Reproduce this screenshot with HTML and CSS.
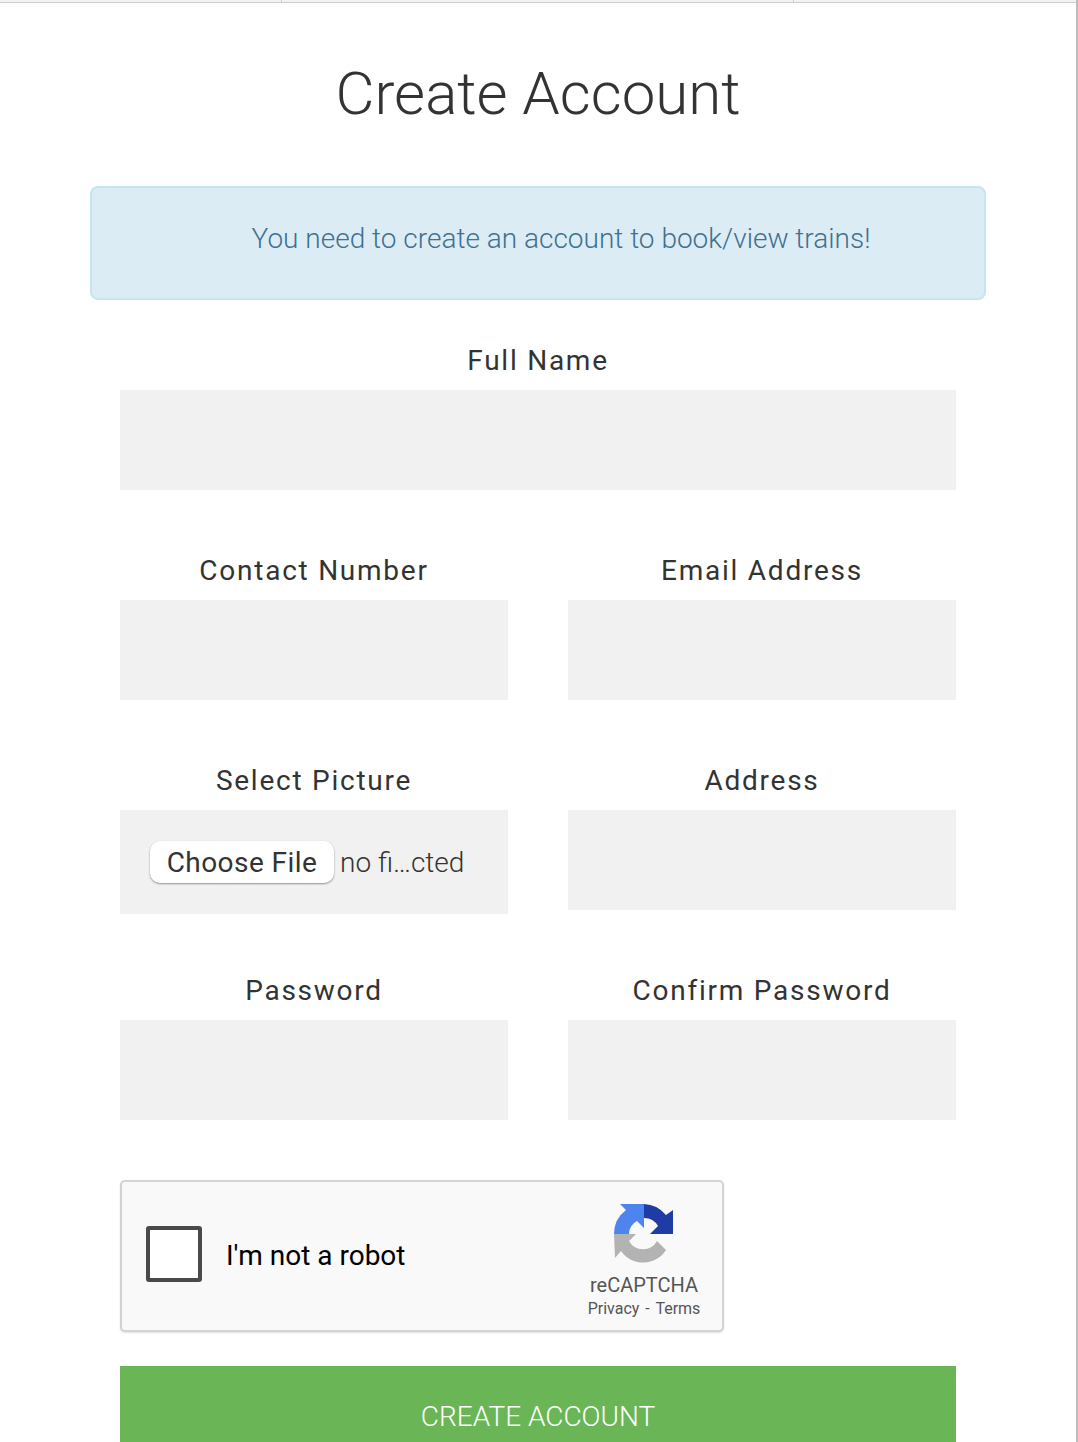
FILE: index.html
```html
<!DOCTYPE html>
<html lang="en">
<head>
  <meta charset="UTF-8" />
  <meta name="viewport" content="width=device-width, initial-scale=1.0"/>
  <title>Create Account</title>
  <link rel="stylesheet" href="styles.css">
</head>
<body>
  <div class="page">
    <div class="topbar">
      <div class="tab tab-first"></div>
      <div class="tab tab-second"></div>
    </div>

    <h1>Create Account</h1>

    <div class="alert">You need to create an account to book/view trains!</div>

    <form class="form">
      <div class="group group-wide">
        <label>Full Name</label>
        <input class="field" type="text">
      </div>

      <div class="group">
        <label>Contact Number</label>
        <input class="field" type="text">
      </div>
      <div class="group">
        <label>Email Address</label>
        <input class="field" type="text">
      </div>

      <div class="group">
        <label>Select Picture</label>
        <div class="field file-field">
          <button type="button" class="file-button">Choose File</button>
          <span class="file-name">no fi…cted</span>
        </div>
      </div>
      <div class="group">
        <label>Address</label>
        <input class="field" type="text">
      </div>

      <div class="group">
        <label>Password</label>
        <input class="field" type="password">
      </div>
      <div class="group">
        <label>Confirm Password</label>
        <input class="field" type="password">
      </div>

      <!-- captcha -->
      <div class="captcha group-wide">
        <div class="captcha-box"></div>
        <div class="captcha-text">I'm not a robot</div>
        <div class="captcha-logo">
          <svg class="captcha-icon" viewBox="0 0 60 60" width="60" height="60">
            <path fill="#b3b3b3" d="M0 30H22L15 37A16 16 0 0 0 43 37L52 46A27 27 0 0 1 7 47L1 54Z"/>
            <path fill="#4d84ee" d="M0 30A30 30 0 0 1 12 6L6 0H30V24L23 17A15 15 0 0 0 15 30Z"/>
            <path fill="#1f3ca6" d="M30 0A30 30 0 0 1 52 11L59 6V30H36L44 22A16 16 0 0 0 30 14Z"/>
          </svg>
          <div class="captcha-brand">reCAPTCHA</div>
          <div class="captcha-links">Privacy - Terms</div>
        </div>
      </div>

      <button type="button" class="submit group-wide">CREATE ACCOUNT</button>
    </form>
  </div>
</body>
</html>
```

FILE: styles.css
```css
html, body {
  margin: 0;
  height: 100%;
  overflow: hidden;
}

body {
  font-family: 'Roboto', sans-serif;
  background-color: #fff;
  color: #333;
}

.page {
  height: 100vh;
  box-sizing: border-box;
  border-right: 2px solid #bdbdbd;
  overflow: hidden;
}

.topbar {
  display: grid;
  grid-template-columns: 282px 512px 1fr;
  height: 3px;
  box-sizing: border-box;
  background-color: #f2f2f2;
  border-bottom: 1px solid #ccc;
}

.tab {
  border-right: 1px solid #ccc;
}

h1 {
  margin: 56px 0 57px;
  font-size: 60px;
  line-height: 70px;
  font-weight: 300;
  text-align: center;
}

.alert {
  margin: 0 90px;
  height: 114px;
  box-sizing: border-box;
  padding: 34px 20px 0 66px;
  background-color: #dcecf5;
  border: 2px solid #c3e6ef;
  border-radius: 8px;
  color: #3f7190;
  font-size: 28px;
  line-height: 34px;
  font-weight: 300;
  text-align: center;
}

.form {
  display: grid;
  grid-template-columns: 388px 388px;
  column-gap: 60px;
  margin: 40px 120px 0;
}

.group {
  height: 140px;
  margin-bottom: 70px;
}

.group-wide {
  grid-column: 1 / 3;
}

label {
  display: block;
  height: 50px;
  font-size: 28px;
  line-height: 42px;
  letter-spacing: 1.75px;
  text-align: center;
}

.field {
  display: block;
  width: 100%;
  height: 100px;
  box-sizing: border-box;
  border: 0;
  padding: 0;
  background-color: #f1f1f1;
}

.file-field {
  display: flex;
  align-items: center;
  height: 104px;
  padding: 0 0 0 30px;
}

.file-button {
  width: 184px;
  height: 42px;
  padding: 0;
  border: 0;
  border-radius: 10px;
  background-color: #fff;
  box-shadow: 0 1px 2px rgba(0, 0, 0, 0.4);
  color: #333;
  font-family: 'Roboto', sans-serif;
  font-size: 28px;
  font-weight: 400;
  letter-spacing: 0.45px;
}

.file-name {
  margin-left: 6px;
  font-size: 28px;
  font-weight: 300;
}

.captcha {
  display: flex;
  align-items: center;
  width: 604px;
  height: 152px;
  box-sizing: border-box;
  padding: 0 20px 0 24px;
  background-color: #f9f9f9;
  border: 2px solid #d3d3d3;
  border-radius: 5px;
  box-shadow: 0 1px 2px rgba(0, 0, 0, 0.12);
}

.captcha-box {
  width: 56px;
  height: 56px;
  box-sizing: border-box;
  margin-bottom: 4px;
  background-color: #fff;
  border: 4px solid #4a4a4a;
  border-radius: 3px;
}

.captcha-text {
  flex: 1;
  margin-left: 24px;
  padding-bottom: 2px;
  color: #000;
  font-size: 28px;
}

.captcha-logo {
  display: flex;
  flex-direction: column;
  align-items: center;
  width: 116px;
  padding-top: 10px;
  color: #555;
}

.captcha-icon {
  display: block;
  margin-bottom: 8px;
}

.captcha-brand {
  font-size: 20px;
  line-height: 26px;
}

.captcha-links {
  margin-top: 1px;
  font-size: 16px;
  line-height: 20px;
  word-spacing: 2px;
}

.submit {
  height: 100px;
  margin-top: 34px;
  padding: 0;
  border: 0;
  background-color: #6ab657;
  color: #fff;
  font-family: 'Roboto', sans-serif;
  font-size: 28px;
  font-weight: 300;
}
```
